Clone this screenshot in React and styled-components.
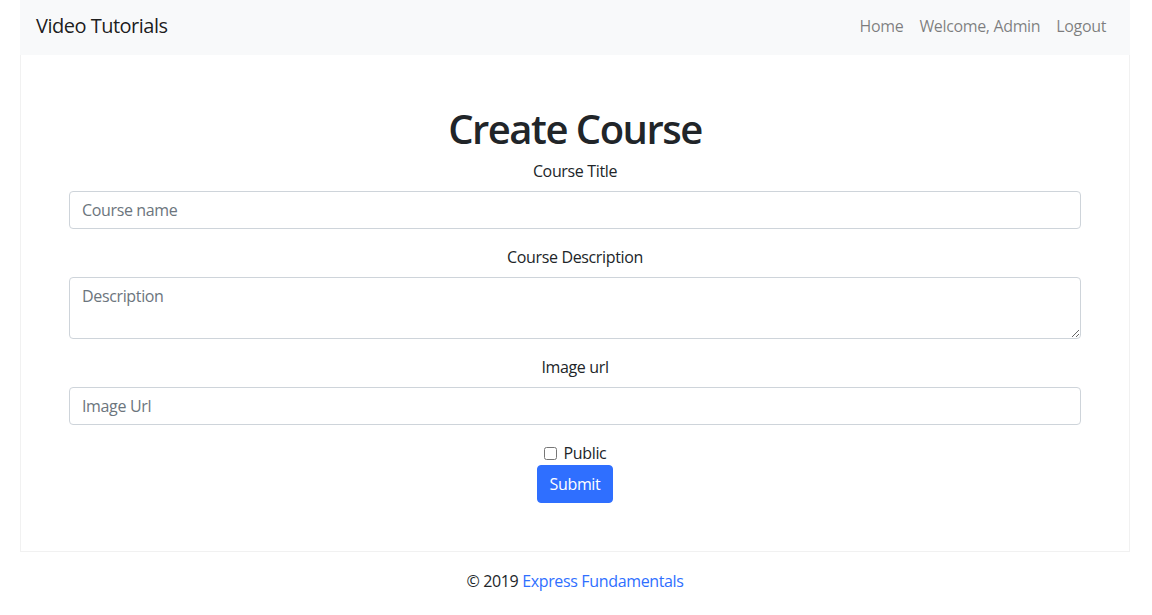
import React from "react";
import styled, { createGlobalStyle } from "styled-components";

const Global = createGlobalStyle`
  * { box-sizing: border-box; }
  body {
    margin: 0;
    font-family: "Open Sans", "Noto Sans", Arial, sans-serif;
    font-size: 16px;
    line-height: 1.5;
    letter-spacing: -0.35px;
    color: #212529;
    background: #fff;
  }
`;

const Container = styled.div`
  width: 1110px;
  margin: 0 0 0 20px;
`;

const Navbar = styled.nav`
  display: flex;
  align-items: center;
  justify-content: space-between;
  height: 55px;
  padding: 6px 16px 10px;
  background: #f8f9fa;
`;

const Brand = styled.a`
  font-size: 20px;
  line-height: 30px;
  letter-spacing: -0.5px;
  color: rgba(0, 0, 0, 0.9);
  text-decoration: none;
`;

const NavList = styled.div`
  display: flex;
  align-items: center;
`;

const NavLink = styled.a`
  padding: 8px;
  color: rgba(0, 0, 0, 0.5);
  text-decoration: none;
  line-height: 24px;
`;

const Card = styled.div`
  border: 1px solid #f1f1f1;
  border-top: none;
  padding: 48px;
`;

const Title = styled.h1`
  margin: 0 0 8px;
  padding-top: 2px;
  height: 48px;
  font-size: 40px;
  font-weight: 600;
  letter-spacing: -1.5px;
  line-height: 48px;
  text-align: center;
`;

const Group = styled.div`
  margin-bottom: ${(p) => (p.$last ? "0" : "16px")};
  text-align: center;
`;

const Label = styled.label`
  display: block;
  margin-bottom: 8px;
  line-height: 24px;
`;

const Input = styled.input`
  display: block;
  width: 100%;
  height: 38px;
  padding: 6px 12px;
  font: inherit;
  letter-spacing: inherit;
  color: #495057;
  border: 1px solid #ced4da;
  border-radius: 4px;
  &::placeholder { color: #6c757d; }
`;

const TextArea = styled.textarea`
  display: block;
  width: 100%;
  height: 62px;
  padding: 6px 12px;
  font: inherit;
  letter-spacing: inherit;
  color: #495057;
  border: 1px solid #ced4da;
  border-radius: 4px;
  &::placeholder { color: #6c757d; }
`;

const Check = styled.div`
  display: flex;
  justify-content: center;
  align-items: center;
  height: 24px;
`;

const CheckBox = styled.input`
  width: 13px;
  height: 13px;
  margin: 0 7px 0 0;
`;

const Button = styled.button`
  font: inherit;
  letter-spacing: inherit;
  line-height: 24px;
  padding: 6px 12px;
  color: #fff;
  background: #2f6fff;
  border: 1px solid #2f6fff;
  border-radius: 4px;
`;

const Footer = styled.footer`
  margin-top: 17px;
  text-align: center;
  line-height: 24px;
`;

const FooterLink = styled.a`
  color: #2f6fff;
  text-decoration: none;
`;

export default function App() {
  return (
    <>
      <Global />
      <Container>
        <Navbar>
          <Brand href="#">Video Tutorials</Brand>
          <NavList>
            <NavLink href="#">Home</NavLink>
            <NavLink href="#">Welcome, Admin</NavLink>
            <NavLink href="#">Logout</NavLink>
          </NavList>
        </Navbar>
        <Card>
          <Title>Create Course</Title>
          <Group>
            <Label>Course Title</Label>
            <Input placeholder="Course name" />
          </Group>
          <Group>
            <Label>Course Description</Label>
            <TextArea placeholder="Description" rows={2} />
          </Group>
          <Group>
            <Label>Image url</Label>
            <Input placeholder="Image Url" />
          </Group>
          <Group $last>
            <Check>
              <CheckBox type="checkbox" id="pub" />
              <label htmlFor="pub">Public</label>
            </Check>
            <Button type="submit">Submit</Button>
          </Group>
        </Card>
        <Footer>
          © 2019 <FooterLink href="#">Express Fundamentals</FooterLink>
        </Footer>
      </Container>
    </>
  );
}
